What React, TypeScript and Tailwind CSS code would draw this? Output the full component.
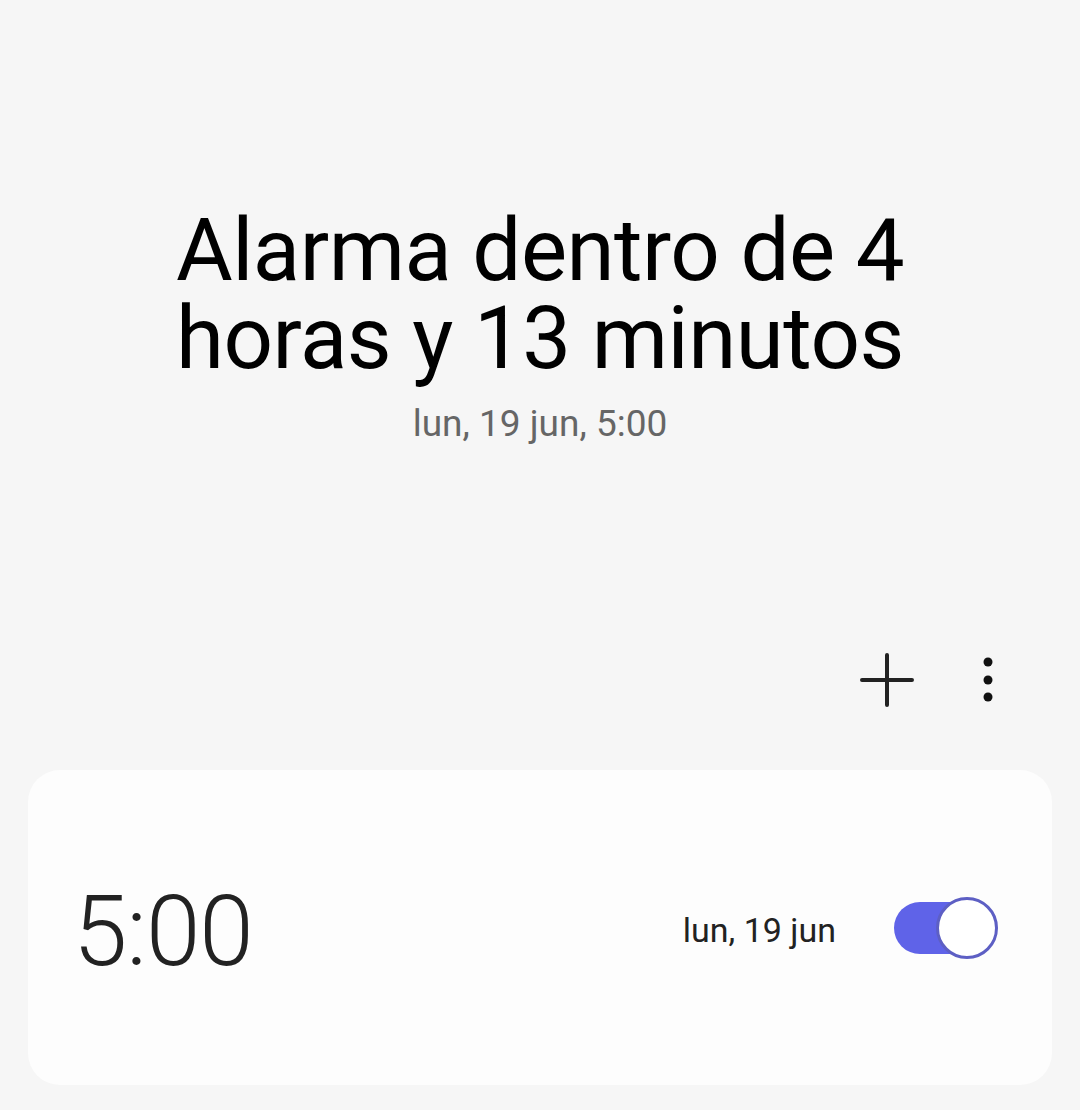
export default function App() {
  return (
    <div
      className="w-[1080px] h-[1110px] bg-[#f6f6f6] flex flex-col overflow-hidden"
      style={{ fontFamily: 'Roboto, "Noto Sans", sans-serif' }}
    >
      {/* Header */}
      <div className="flex flex-col items-center pt-[206px]">
        <h1 className="text-[87px] leading-[88px] text-black text-center font-normal tracking-[-0.5px]">
          Alarma dentro de 4
          <br />
          horas y 13 minutos
        </h1>
        <p className="mt-[22px] text-[37px] leading-[40px] text-[#666666]">
          lun, 19 jun, 5:00
        </p>
      </div>

      {/* Toolbar */}
      <div className="mt-[206px] flex items-center justify-end pr-[86px] gap-[67px] h-[60px]">
        <svg width="56" height="56" viewBox="0 0 56 56" fill="none">
          <path d="M28 3v50M3 28h50" stroke="#222" strokeWidth="4" strokeLinecap="round" />
        </svg>
        <svg width="12" height="52" viewBox="0 0 12 52">
          <circle cx="6" cy="8" r="4.5" fill="#111" />
          <circle cx="6" cy="26" r="4.5" fill="#111" />
          <circle cx="6" cy="43" r="4.5" fill="#111" />
        </svg>
      </div>

      {/* Alarm card */}
      <div className="mt-[60px] mx-[28px] h-[315px] rounded-[32px] bg-[#fdfdfd] flex items-center pl-[45px] pr-[54px]">
        <span className="text-[98px] leading-none font-light text-[#222] tracking-[-1px] mt-[8px]">5:00</span>
        <span className="ml-auto text-[34px] text-[#222] mr-[58px] mt-[6px]">lun, 19 jun</span>
        <div className="relative w-[104px] h-[62px] flex items-center">
          <div className="w-[96px] h-[52px] rounded-full bg-[#5f63e8]" />
          <div className="absolute right-0 top-0 w-[62px] h-[62px] rounded-full bg-white border-[3px] border-[#5d5fc4]" />
        </div>
      </div>
    </div>
  );
}
